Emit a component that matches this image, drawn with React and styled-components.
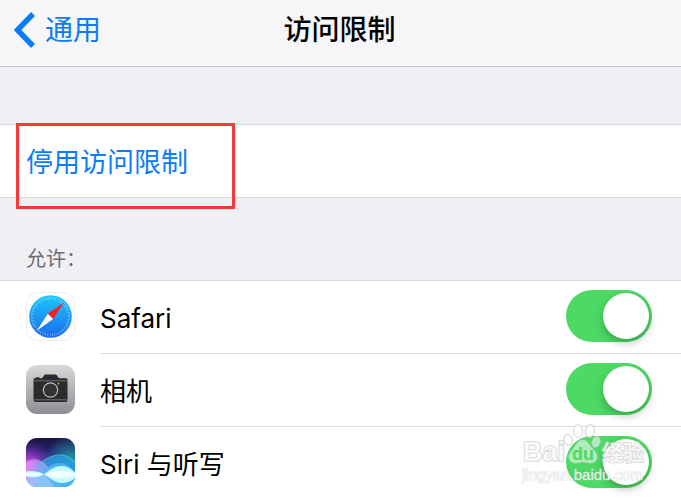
import React from 'react'
import styled, { createGlobalStyle } from 'styled-components'

const GlobalStyle = createGlobalStyle`
    * {
        box-sizing: border-box;
    }
    body {
        margin: 0;
        background: #efeff4;
        color: #000;
        font-family: Inter, "Noto Sans CJK SC", sans-serif;
        overflow-x: hidden;
    }
`
const Page = styled.main`
    display: flex;
    flex-direction: column;
    min-height: 100vh;
`
const Header = styled.header`
    display: grid;
    grid-template-columns: 1fr auto 1fr;
    align-items: center;
    padding: 10px 16px 16px 14px;
    background: #f6f6f8;
    border-bottom: 1px solid #c4c4ca;
`
const Back = styled.a`
    display: flex;
    align-items: center;
    gap: 10px;
    justify-self: start;
    color: #0a7cf8;
    font-size: 28px;
    line-height: 40px;
    text-decoration: none;
`
const Title = styled.h1`
    margin: 0;
    font-size: 28px;
    font-weight: 500;
    line-height: 40px;
`
const Group = styled.section`
    position: relative;
    margin-top: 57px;
    background: #fff;
    border-top: 1px solid #d9d9dd;
    border-bottom: 1px solid #d9d9dd;
`
const Action = styled.button`
    display: block;
    width: 100%;
    padding: 18px 26px 14px;
    border: none;
    background: none;
    color: #0a7cf8;
    font-family: inherit;
    font-size: 27px;
    line-height: 40px;
    text-align: left;
    cursor: pointer;
`
const Highlight = styled.div`
    position: absolute;
    top: -2px;
    left: 16px;
    width: 219px;
    height: 86px;
    border: 3px solid #fb3838;
    pointer-events: none;
`
const GroupLabel = styled.h2`
    margin: 0;
    padding: 46px 26px 6px;
    color: #6d6d72;
    font-size: 20px;
    font-weight: 400;
    line-height: 30px;
`
const List = styled.ul`
    flex: 1;
    margin: 0;
    padding: 0;
    list-style-type: none;
    background: #fff;
    border-top: 1px solid #d9d9dd;
`
const Row = styled.li`
    position: relative;
    display: flex;
    align-items: center;
    gap: 25px;
    padding-left: 26px;
`
const RowBody = styled.div`
    display: flex;
    flex: 1;
    align-items: center;
    justify-content: space-between;
    padding: 9px 29px 11px 0;
    border-bottom: ${props => props.$last ? 'none' : '1px solid #dcdcdf'};
`
const RowLabel = styled.label`
    padding-top: 6px;
    font-size: 26px;
    line-height: 40px;
`
const Switch = styled.input`
    appearance: none;
    display: flex;
    justify-content: flex-start;
    width: 86px;
    height: 52px;
    margin: 0;
    padding: 3px;
    border-radius: 26px;
    background: #d9d9dd;
    cursor: pointer;

    &::before {
        content: '';
        width: 46px;
        height: 46px;
        border-radius: 50%;
        background: #fff;
        box-shadow: 0 4px 8px rgba(0, 0, 0, 0.25);
    }
    &:checked {
        justify-content: flex-end;
        background: #4cd964;
    }
`
const Icon = styled.svg`
    display: block;
    flex: none;
    width: 49px;
    height: 49px;
    margin-bottom: 2px;
`
const Watermark = styled.div`
    position: absolute;
    right: 36px;
    top: -4px;
    pointer-events: none;
`
const WatermarkArt = styled.svg`
    display: block;
    width: 124px;
    height: 62px;
    font-family: "Liberation Sans", "Noto Sans CJK SC", sans-serif;
`

const ChevronIcon = () => (
  <svg width="21" height="36" viewBox="0 0 21 36" aria-hidden="true">
    <path d="M19 2 3.500 18 19 34" fill="none" stroke="#0a7cf8" strokeWidth="5.4" />
  </svg>
)

const SafariIcon = () => (
  <Icon viewBox="0 0 49 49" aria-hidden="true">
    <defs>
      <linearGradient id="safari" x1="0" y1="0" x2="0" y2="1">
        <stop offset="0" stopColor="#1cc8fb" />
        <stop offset="1" stopColor="#1c68ec" />
      </linearGradient>
    </defs>
    <rect x=".5" y=".5" width="48" height="48" rx="11" fill="#fff" stroke="#ececef" />
    <circle cx="24.5" cy="24.5" r="21.3" fill="url(#safari)" />
    <circle cx="24.5" cy="24.5" r="18.4" fill="none" stroke="#fff" strokeOpacity=".5" strokeWidth="2.6" strokeDasharray=".7 1.7" />
    <path d="m38 10.5-16.2 11.3 5.3 5.3Z" fill="#fb1c22" />
    <path d="m11 38.5 10.8-16.7 5.3 5.3Z" fill="#fff" />
  </Icon>
)

const CameraIcon = () => (
  <Icon viewBox="0 0 49 49" aria-hidden="true">
    <defs>
      <linearGradient id="camera" x1="0" y1="0" x2="0" y2="1">
        <stop offset="0" stopColor="#dadadc" />
        <stop offset="1" stopColor="#8d8d93" />
      </linearGradient>
    </defs>
    <rect width="49" height="49" rx="11" fill="url(#camera)" />
    <path d="M8 13.2h2v-1h3.5v1h2.3c1.2 0 1.8-3.7 3.6-3.7h10.2c1.8 0 2.4 3.7 3.6 3.7H40q1.5 0 1.500 1.500V35q0 2-2 2h-30q-2 0-2-2V14.700q0-1.500.5-1.500Z" fill="#2b2b2d" />
    <path d="M7.5 15.8h34M7.5 34.8h34" stroke="#77777a" strokeWidth=".9" />
    <circle cx="24.5" cy="25" r="8.200" fill="#242426" />
    <circle cx="24.5" cy="25" r="7.200" fill="#333335" stroke="#bdbdc0" strokeWidth="1.2" />
    <circle cx="32.5" cy="18.6" r=".9" fill="#f2cf26" />
  </Icon>
)

const SiriIcon = () => (
  <Icon viewBox="0 0 49 49" aria-hidden="true">
    <defs>
      <linearGradient id="siriSky" x1="0" y1="0" x2="0" y2="1">
        <stop offset="0" stopColor="#1c123f" />
        <stop offset=".28" stopColor="#26236f" />
        <stop offset=".6" stopColor="#3b64bd" />
        <stop offset="1" stopColor="#57a5f0" />
      </linearGradient>
      <radialGradient id="siriPink" cx=".06" cy=".55" r=".5">
        <stop offset="0" stopColor="#f04be8" />
        <stop offset=".5" stopColor="#9a36c4" stopOpacity=".6" />
        <stop offset="1" stopColor="#6a2aa5" stopOpacity="0" />
      </radialGradient>
      <radialGradient id="siriTeal" cx=".9" cy=".42" r=".5">
        <stop offset="0" stopColor="#20a4ad" stopOpacity=".8" />
        <stop offset="1" stopColor="#20a4ad" stopOpacity="0" />
      </radialGradient>
      <linearGradient id="siriWave" x1="0" y1="0" x2="1" y2="0">
        <stop offset="0" stopColor="#f08ff5" />
        <stop offset=".5" stopColor="#86aef8" />
        <stop offset="1" stopColor="#35a8ea" />
      </linearGradient>
      <clipPath id="siriClip"><rect width="49" height="49" rx="11" /></clipPath>
    </defs>
    <g clipPath="url(#siriClip)">
      <path d="M0 0h49v49H0Z" fill="url(#siriSky)" />
      <path d="M0 0h49v49H0Z" fill="url(#siriTeal)" />
      <path d="M0 0h49v49H0Z" fill="url(#siriPink)" />
      <path d="M12 28C20 20 29 17 37 18c5 .6 9 3 12 6V49H8Z" fill="#2b9de4" fillOpacity=".8" />
      <path d="M14 25.500C22 18 33 15.500 40 18q5 2 9 6" fill="none" stroke="#4fdbe2" strokeOpacity=".8" />
      <path d="M0 25c6-4 13-3.500 19 2 7 6 11 14 15 22H0Z" fill="url(#siriWave)" fillOpacity=".8" />
      <path d="M0 24.500c6-4 13-3.500 19 2 7 6 10 13 14 21" fill="none" stroke="#e6b4ff" strokeOpacity=".7" />
      <path d="M4 49c6-3 10-8 13-13 4-7 9-11 16-11 8 0 12 4 16 9v15Z" fill="#58baf8" fillOpacity=".7" />
      <path d="M0 40c6 0 12-1 18-4 4 4 8 9 10 13H0Z" fill="#9ac8fb" fillOpacity=".7" />
      <path d="M0 33.500c6-1 12-.5 18 2.800C25 31 29 28 35.500 28c6 0 10 3 13.500 6.500v6C45 43 41 45 36 45c-7 0-12-5-18-8.700C12 39.500 6 40.500 0 38.500Z" fill="#c4fbff" />
      <path d="M0 35q10-1 18 1.300Q25 33 34 33t15 2.500v2.500q-7 2.500-15 2t-16-3.700Q10 38.500 0 38Z" fill="#fff" fillOpacity=".75" />
    </g>
  </Icon>
)

const BaiduMark = () => (
  <Watermark>
    <WatermarkArt viewBox="0 0 124 62" role="img" aria-label="Baidu 经验">
      <g fill="#fff" fillOpacity=".55" stroke="#c9c9c9" strokeOpacity=".8" strokeWidth="1">
        <ellipse cx="47" cy="17" rx="4" ry="5.500" transform="rotate(-15 47 17)" />
        <ellipse cx="57" cy="8" rx="4.500" ry="6.500" />
        <ellipse cx="69" cy="8" rx="4.500" ry="6.500" transform="rotate(10 69 8)" />
        <ellipse cx="75" cy="19" rx="4" ry="5.500" transform="rotate(20 75 19)" />
        <path d="M62 17c5 0 6 5 9 8s5 5 5 9-3 6-7 6c-3 0-4-1-7-1s-4 1-7 1c-4 0-7-2-7-6s3-6 5-9 4-8 9-8Z" />
      </g>
      <g fill="#fff" fillOpacity=".7" stroke="#c6c6c6" strokeOpacity=".6" strokeWidth="2" strokeLinejoin="round" paintOrder="stroke" fontWeight="700">
        <text x="2" y="38" fontSize="27">Bai</text>
        <text x="81" y="37" fontSize="21">经验</text>
      </g>
      <text x="51" y="37" fontSize="18" fontWeight="700" fill="#4cd964">du</text>
      <text x="1" y="57" fontSize="15" fill="#fff" fillOpacity=".8" stroke="#c6c6c6" strokeOpacity=".6" strokeWidth="1" paintOrder="stroke">jingyan.baidu.com</text>
    </WatermarkArt>
  </Watermark>
)

const items = [
  { id: 'safari', name: 'Safari', icon: <SafariIcon/> },
  { id: 'camera', name: '相机', icon: <CameraIcon/> },
  { id: 'siri', name: 'Siri 与听写', icon: <SiriIcon/> },
]

const App = () => {
  return (
    <Page>
        <GlobalStyle/>
        <Header>
            <Back href="#general"><ChevronIcon/>通用</Back>
            <Title>访问限制</Title>
        </Header>
        <Group>
            <Action type="button">停用访问限制</Action>
            <Highlight/>
        </Group>
        <GroupLabel>允许：</GroupLabel>
        <List>
            {items.map((item, i) => (
                <Row key={item.id}>
                    {item.icon}
                    <RowBody $last={i === items.length - 1}>
                        <RowLabel htmlFor={item.id}>{item.name}</RowLabel>
                        <Switch id={item.id} type="checkbox" defaultChecked/>
                    </RowBody>
                    {item.id === 'siri' && <BaiduMark/>}
                </Row>
            ))}
        </List>
    </Page>
  )
}

export default App
